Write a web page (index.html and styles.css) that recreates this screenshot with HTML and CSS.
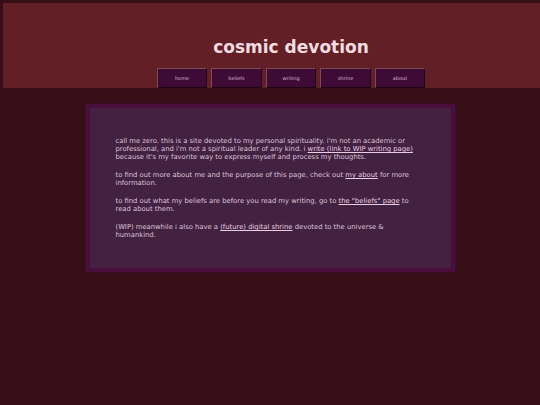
FILE: index.html
```html
<!DOCTYPE html>
<html>
<head>
<meta charset="utf-8">
<title>cosmic devotion</title>
<link rel="stylesheet" href="styles.css">
</head>
<body>
<header class="header">
  <h1 class="title">cosmic devotion</h1>
  <nav class="nav">
    <a class="nav-btn" href="#">home</a>
    <a class="nav-btn" href="#">beliefs</a>
    <a class="nav-btn" href="#">writing</a>
    <a class="nav-btn" href="#">shrine</a>
    <a class="nav-btn" href="#">about</a>
  </nav>
</header>
<main class="box">
  <p>call me zero. this is a site devoted to my personal spirituality. i'm not an academic or professional, and i'm not a spiritual leader of any kind. i <a href="#">write (link to WIP writing page)</a> because it's my favorite way to express myself and process my thoughts.</p>
  <p>to find out more about me and the purpose of this page, check out <a href="#">my about</a> for more information.</p>
  <p>to find out what my beliefs are before you read my writing, go to <a href="#">the "beliefs" page</a> to read about them.</p>
  <p>(WIP) meanwhile i also have a <a href="#">(future) digital shrine</a> devoted to the universe &amp; humankind.</p>
</main>
</body>
</html>
```
FILE: styles.css
```css
html, body {
  margin: 0;
  padding: 0;
}
body {
  background: #360e18;
  font-family: "DejaVu Sans", Verdana, sans-serif;
  min-height: 405px;
}
.header {
  margin: 3px 0 0 3px;
  background: #631f26;
  padding: 34px 0 0 39px;
  text-align: center;
}
.title {
  margin: 0;
  font-size: 17px;
  line-height: 20px;
  font-weight: bold;
  color: #f4dde0;
}
.nav {
  margin-top: 11px;
  display: flex;
  justify-content: center;
  gap: 4px;
}
.nav-btn {
  box-sizing: border-box;
  width: 50.5px;
  height: 20px;
  background: #3e0b36;
  border: 1px solid;
  border-color: #7c4a58 #1c0710 #1c0710 #7c4a58;
  color: #d9b2d0;
  font-size: 5px;
  line-height: 18px;
  text-decoration: none;
  text-align: center;
}
.box {
  display: block;
  box-sizing: border-box;
  width: 369px;
  margin: 16px auto 0;
  background: #432140;
  border: 4px solid #4b0d3e;
  box-shadow: 0 0 2px #4b0d3e;
  padding: 29px 26px;
  color: #dcc4d8;
  font-size: 6.8px;
  line-height: 8px;
}
.box p {
  margin: 0 0 10px;
}
.box p:last-child {
  margin-bottom: 0;
}
.box a {
  color: #e8d0e2;
  text-decoration: underline;
}
```
